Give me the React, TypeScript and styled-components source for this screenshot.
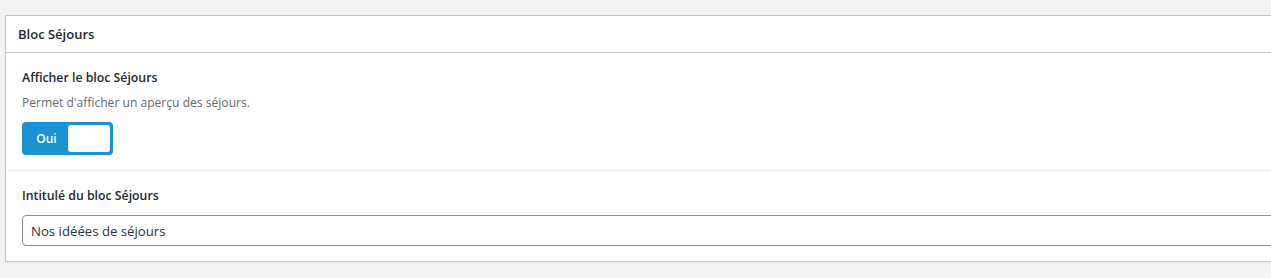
import React from "react";
import styled, { createGlobalStyle } from "styled-components";

const Global = createGlobalStyle`
  html, body { margin: 0; padding: 0; background: #f1f1f1; }
  body { font-family: "Open Sans", "Noto Sans", sans-serif; color: #23282d; }
`;

const Page = styled.div`
  padding: 15px 0 0 5px;
  overflow: hidden;
  height: 278px;
  box-sizing: border-box;
`;

const Box = styled.section`
  width: 1300px;
  background: #fff;
  border: 1px solid #c3c4c7;
`;

const Header = styled.div`
  height: 36px;
  display: flex;
  align-items: center;
  padding-left: 12px;
  border-bottom: 1px solid #c3c4c7;
`;

const Title = styled.h2`
  margin: 0;
  font-size: 13px;
  font-weight: 600;
  color: #23282d;
`;

const Field = styled.div<{ $sep?: boolean }>`
  padding: 15px 16px;
  border-bottom: ${(p) => (p.$sep ? "1px solid #eeeeee" : "none")};
  display: flex;
  flex-direction: column;
  align-items: flex-start;
`;

const Label = styled.div`
  font-size: 12.3px;
  font-weight: 600;
  line-height: 20px;
  color: #23282d;
`;

const Desc = styled.div`
  margin-top: 5px;
  font-size: 12.1px;
  line-height: 20px;
  color: #646970;
`;

const Toggle = styled.div`
  margin-top: 9px;
  width: 91px;
  height: 33px;
  box-sizing: border-box;
  background: #1b93d3;
  border-radius: 4px;
  display: flex;
  align-items: center;
  padding: 3px;
`;

const ToggleText = styled.span`
  width: 43px;
  text-align: center;
  color: #fff;
  font-size: 12px;
  font-weight: 600;
`;

const Knob = styled.span`
  flex: 1;
  align-self: stretch;
  background: #fff;
  border-radius: 3px;
`;

const Input = styled.input`
  margin-top: 9px;
  width: 1400px;
  height: 31px;
  box-sizing: border-box;
  border: 1px solid #8c8f94;
  border-radius: 4px;
  padding: 0 8px;
  font-family: "Open Sans", "Noto Sans", sans-serif;
  font-size: 13.2px;
  color: #2c3338;
  background: #fff;
  outline: none;
`;

export default function App() {
  return (
    <>
      <Global />
      <Page>
        <Box>
          <Header>
            <Title>Bloc Séjours</Title>
          </Header>
          <Field $sep>
            <Label>Afficher le bloc Séjours</Label>
            <Desc>Permet d'afficher un aperçu des séjours.</Desc>
            <Toggle>
              <ToggleText>Oui</ToggleText>
              <Knob />
            </Toggle>
          </Field>
          <Field>
            <Label>Intitulé du bloc Séjours</Label>
            <Input defaultValue="Nos idéées de séjours" />
          </Field>
        </Box>
      </Page>
    </>
  );
}
